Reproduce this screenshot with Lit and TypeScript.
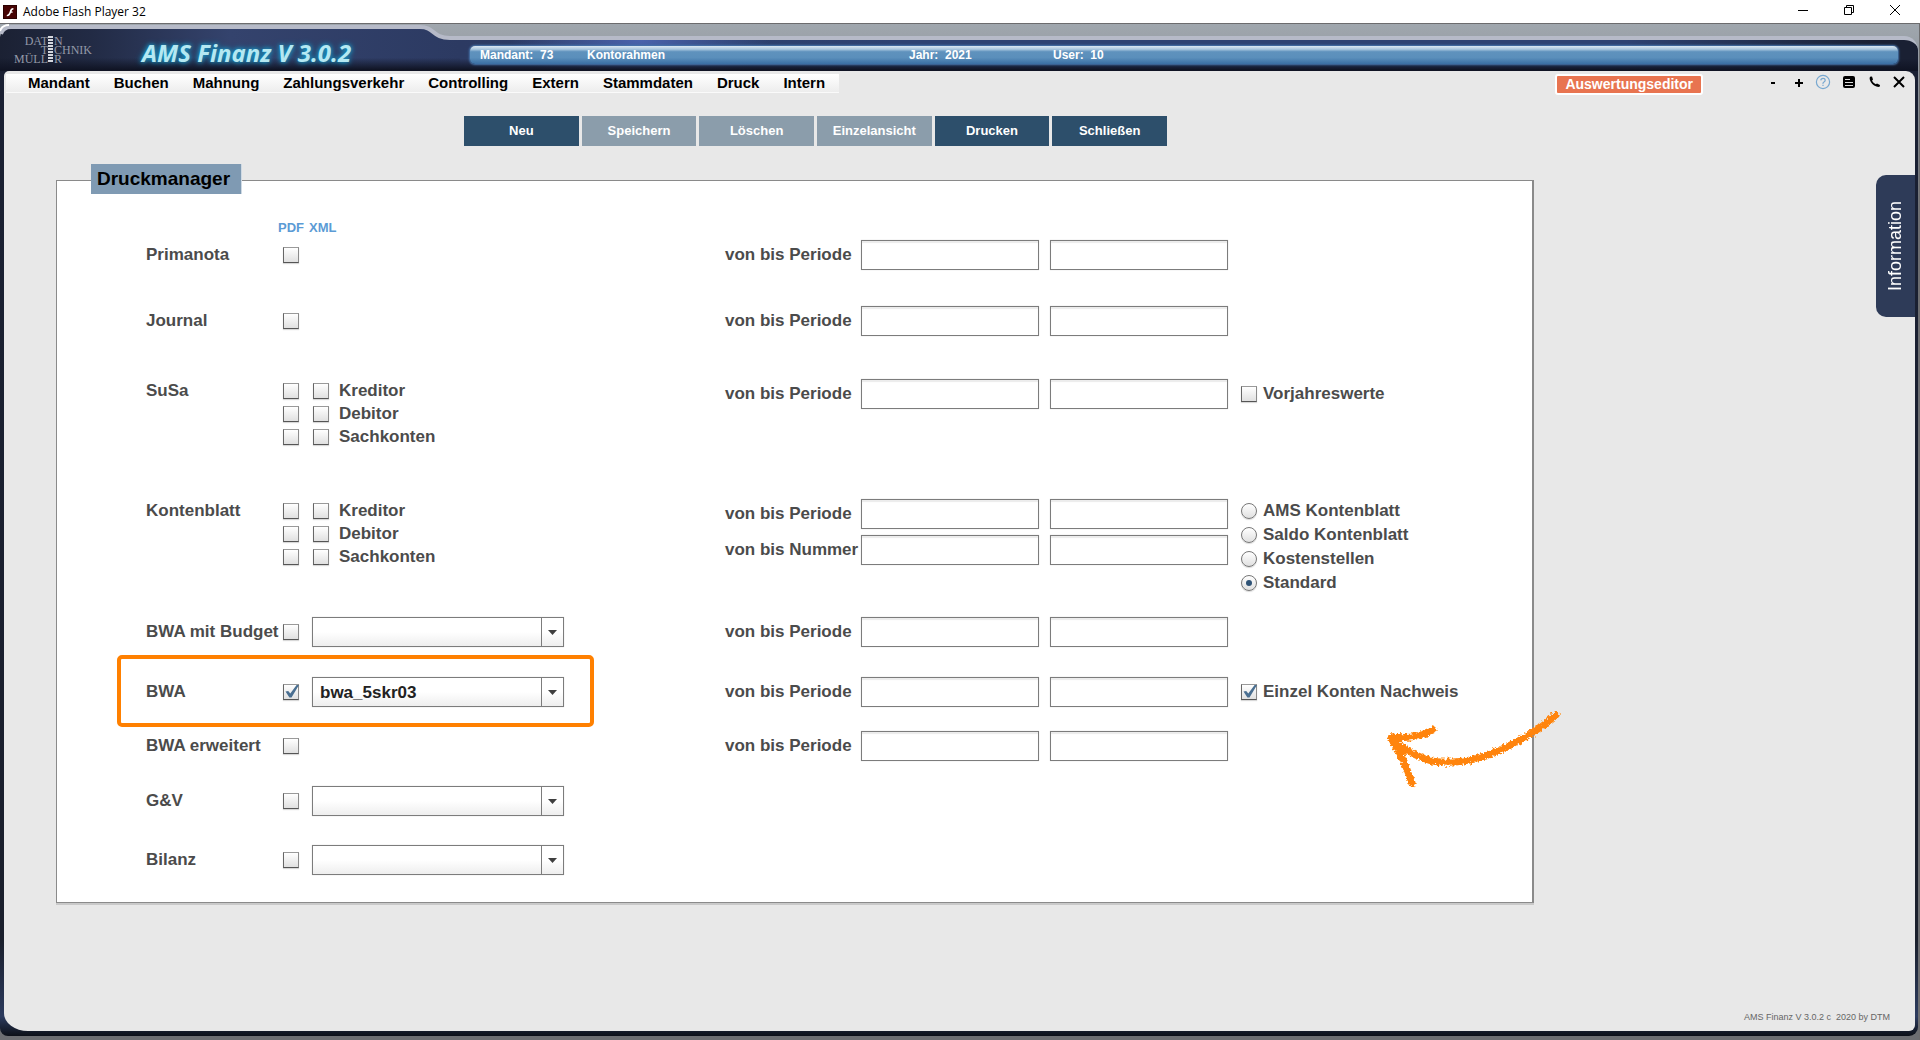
import { LitElement, html, svg, css, nothing, type TemplateResult } from "lit";
import { customElement, property } from "lit/decorators.js";

interface Option {
  label: string;
  checked?: boolean;
}

interface ReportRow {
  id: string;
  label: string;
  /** Account groups, each with its own PDF and XML box. */
  groups?: string[];
  checked?: boolean;
  /** Present when the report offers a template list. */
  template?: string;
  ranges: string[];
  flag?: Option;
  layouts?: Option[];
  highlighted?: boolean;
}

const MENU = [
  "Mandant",
  "Buchen",
  "Mahnung",
  "Zahlungsverkehr",
  "Controlling",
  "Extern",
  "Stammdaten",
  "Druck",
  "Intern",
];

const ACTIONS = [
  { label: "Neu", enabled: true },
  { label: "Speichern", enabled: false },
  { label: "Löschen", enabled: false },
  { label: "Einzelansicht", enabled: false },
  { label: "Drucken", enabled: true },
  { label: "Schließen", enabled: true },
];

const GROUPS = ["Kreditor", "Debitor", "Sachkonten"];
const PERIOD = "von bis Periode";

const ROWS: ReportRow[] = [
  { id: "primanota", label: "Primanota", ranges: [PERIOD] },
  { id: "journal", label: "Journal", ranges: [PERIOD] },
  { id: "susa", label: "SuSa", groups: GROUPS, ranges: [PERIOD], flag: { label: "Vorjahreswerte" } },
  {
    id: "kontenblatt",
    label: "Kontenblatt",
    groups: GROUPS,
    ranges: [PERIOD, "von bis Nummer"],
    layouts: [
      { label: "AMS Kontenblatt" },
      { label: "Saldo Kontenblatt" },
      { label: "Kostenstellen" },
      { label: "Standard", checked: true },
    ],
  },
  { id: "bwa-budget", label: "BWA mit Budget", template: "", ranges: [PERIOD] },
  {
    id: "bwa",
    label: "BWA",
    checked: true,
    template: "bwa_5skr03",
    ranges: [PERIOD],
    flag: { label: "Einzel Konten Nachweis", checked: true },
    highlighted: true,
  },
  { id: "bwa-erweitert", label: "BWA erweitert", ranges: [PERIOD] },
  { id: "guv", label: "G&V", template: "", ranges: [] },
  { id: "bilanz", label: "Bilanz", template: "", ranges: [] },
];

const baseStyles = css`
  * {
    box-sizing: border-box;
  }
  button {
    border: 0;
    margin: 0;
    padding: 0;
    background: none;
    font: inherit;
    color: inherit;
  }
  svg {
    display: block;
  }
`;

@customElement("title-bar")
export class TitleBar extends LitElement {
  static styles = [
    baseStyles,
    css`
      :host {
        display: flex;
        align-items: center;
        box-sizing: border-box;
        height: 24px;
        padding: 0 9px 0 3px;
        background: #fff;
        border-bottom: 1px solid #6c6c6e;
        font: 12px/16px "Open Sans", "Noto Sans", sans-serif;
        color: #000;
      }
      .name {
        flex: 1;
        padding-left: 6px;
      }
      .controls {
        display: flex;
        gap: 14px;
        padding-bottom: 3px;
      }
      .controls button {
        display: grid;
        place-items: center;
        width: 32px;
        height: 16px;
      }
    `,
  ];

  render() {
    return html`
      <svg width="14" height="14" viewBox="0 0 14 14" aria-hidden="true">
        <rect width="14" height="14" fill="#2c0000" />
        <rect x="1" y="1" width="12" height="12" fill="#470404" />
        <path
          d="M10.4 3C8 3 7.400 4.700 6.800 6.200C6.100 8.200 5.400 9.700 3.800 9.900V11.300C6.400 11.300 7.300 9.500 8 7.800H9.600V6.400H8.500C8.900 5.300 9.400 4.500 10.400 4.500Z"
          fill="#fff"
        />
      </svg>
      <span class="name">Adobe Flash Player 32</span>
      <div class="controls">
        <button aria-label="Minimieren">
          <svg width="10" height="10"><path d="M0 5.500H10" stroke="#000" /></svg>
        </button>
        <button aria-label="Verkleinern">
          <svg width="10" height="10">
            <path d="M.5 2.500H7.500V9.500H.5ZM2.500 2.500V.5H9.500V7.500H7.500" fill="none" stroke="#000" />
          </svg>
        </button>
        <button aria-label="Schließen">
          <svg width="10" height="10"><path d="M0 0L10 10M10 0L0 10" stroke="#000" /></svg>
        </button>
      </div>
    `;
  }
}

@customElement("app-banner")
export class AppBanner extends LitElement {
  static styles = [
    baseStyles,
    css`
      :host {
        display: flex;
        height: 47px;
      }
      .brand {
        position: relative;
        flex: none;
        display: flex;
        width: 460px;
      }
      .shape {
        position: absolute;
        inset: 0;
      }
      .logo {
        position: relative;
        flex: none;
        width: 142px;
        height: 47px;
        font: 12px "Liberation Serif", serif;
        fill: #9499a8;
      }
      .title {
        position: relative;
        margin: 0;
        padding-top: 13px;
        font: italic bold 24px/32px "Open Sans", "Noto Sans", sans-serif;
        white-space: nowrap;
        color: #b4e8f2;
        text-shadow:
          0 0 4px #1596c4,
          0 0 6px #1596c4;
      }
      .strip {
        flex: 1;
        margin-top: 12px;
        padding: 6px 20px 0 10px;
        border-top: 4px solid #b6bac8;
        border-radius: 0 14px 0 0;
        background:
          linear-gradient(#10142400 60%, #101424 96%),
          radial-gradient(ellipse 130px 50px at 180px 0, #4a62ac, #4a62ac00),
          linear-gradient(90deg, #2c3a62, #2e4272 30%, #2e4272 80%, #1a2033 97%);
      }
      .status {
        display: grid;
        grid-template-columns: 107px 322px 144px 1fr;
        align-items: center;
        height: 18px;
        padding-left: 10px;
        border-radius: 5px;
        background: linear-gradient(#dbe8f2, #a9c6de 18%, #5f92bd 32%, #5b8fbb 65%, #3a6ea3);
        box-shadow: 0 0 2px 1px #4775ac;
        font: bold 12px/16px "Liberation Sans", Arial, sans-serif;
        color: #fff;
        white-space: pre;
      }
    `,
  ];

  render() {
    return html`
      <div class="brand">
        <svg class="shape" width="460" height="47" viewBox="0 0 460 47" aria-hidden="true">
          <defs>
            <linearGradient id="base" x1="0" x2="1">
              <stop offset="0" stop-color="#1b2133" />
              <stop offset=".2" stop-color="#222b45" />
              <stop offset=".5" stop-color="#34436d" />
              <stop offset="1" stop-color="#2c3a62" />
            </linearGradient>
            <linearGradient id="shade" x1="0" x2="0" y1="0" y2="1">
              <stop offset=".7" stop-color="#101424" stop-opacity="0" />
              <stop offset=".97" stop-color="#101424" />
            </linearGradient>
          </defs>
          <path d="M0 47V13Q2 3 12 3H420C434 3 430 14 450 14H460V47Z" fill="url(#base)" />
          <path d="M0 47V13Q2 3 12 3H420C434 3 430 14 450 14H460V47Z" fill="url(#shade)" />
          <path d="M1 10Q3 3 11 3H420C435 3 432 14 450 14H460" fill="none" stroke="#b6bac8" stroke-width="4" />
          <path d="M0 7Q2 1 9 1" fill="none" stroke="#fff" stroke-width="2" />
        </svg>
        <svg class="logo" viewBox="0 0 142 47" role="img" aria-label="Daten Technik Müller">
          <text x="48" y="21" text-anchor="end">DAT</text>
          <text x="54" y="21">N</text>
          <text x="48" y="30" text-anchor="end">T</text>
          <text x="54" y="30">CHNIK</text>
          <text x="48" y="39" text-anchor="end">MÜLL</text>
          <text x="54" y="39">R</text>
          ${[12, 15, 18, 21, 24, 27, 30, 33, 36].map(
            (y) => svg`<rect x="48" y=${y} width="5" height="2" fill="#d4d7de" />`,
          )}
        </svg>
        <h1 class="title">AMS Finanz V 3.0.2</h1>
      </div>
      <div class="strip">
        <div class="status">
          <span>Mandant:  73</span>
          <span>Kontorahmen</span>
          <span>Jahr:  2021</span>
          <span>User:  10</span>
        </div>
      </div>
    `;
  }
}

@customElement("menu-bar")
export class MenuBar extends LitElement {
  static styles = [
    baseStyles,
    css`
      :host {
        display: flex;
        align-items: start;
        box-sizing: border-box;
        height: 45px;
        padding: 3px 4px 0 2px;
        font: bold 15px/18px "Liberation Sans", Arial, sans-serif;
        color: #000;
      }
      .menu {
        display: flex;
        gap: 24px;
        padding: 0 14px 0 22px;
        background: linear-gradient(#fff, #ededed);
        border-bottom: 1px solid #fafafa;
        white-space: nowrap;
      }
      .spacer {
        flex: 1;
      }
      .editor {
        height: 21px;
        padding: 0 8px;
        border: 2px solid #fff;
        border-radius: 3px;
        background: #e87450;
        font-size: 14px;
        line-height: 17px;
        color: #fff;
      }
      .tools {
        display: flex;
        align-items: center;
        margin-left: 56px;
        height: 16px;
      }
      .tools button {
        display: grid;
        place-items: center;
        width: 24px;
        height: 16px;
      }
      .tools .wide {
        width: 28px;
      }
    `,
  ];

  render() {
    return html`
      <nav class="menu">${MENU.map((item) => html`<button>${item}</button>`)}</nav>
      <div class="spacer"></div>
      <button class="editor">Auswertungseditor</button>
      <div class="tools">
        <button class="wide" aria-label="Kleiner">
          <svg width="12" height="12"><path d="M4 7H8" stroke="#000" stroke-width="2" /></svg>
        </button>
        <button aria-label="Größer">
          <svg width="12" height="12"><path d="M2 7H10M6 3V11" stroke="#000" stroke-width="2" /></svg>
        </button>
        <button aria-label="Hilfe">
          <svg width="16" height="16" viewBox="0 0 16 16" fill="none" stroke="#78a8d0">
            <circle cx="8" cy="8" r="6.600" stroke-width="1.200" />
            <path d="M5.800 6.400Q5.900 4.300 8 4.300T10.200 6.200Q10.200 7.200 9 7.900T8 9.800M8 10.800V12" stroke-width="1.200" />
          </svg>
        </button>
        <button class="wide" aria-label="Notizen">
          <svg width="12" height="14" viewBox="0 0 12 14">
            <rect y="1" width="12" height="12" rx="2" fill="#000" />
            <path d="M2 4.500H7M2 7.500H10M2 10.500H10" stroke="#ddd" />
          </svg>
        </button>
        <button aria-label="Telefon">
          <svg width="12" height="12" viewBox="0 0 12 12">
            <path
              d="M1 .8L3 .6L4 3.600L3 4.800Q4.200 7 6.800 8.300L8 7.600L11 8.900L10.800 10.600Q9.600 11.400 7.400 10.600Q2.400 8.600 .9 4Q.3 2 1 .8Z"
              fill="#000"
            />
          </svg>
        </button>
        <button aria-label="Beenden">
          <svg width="12" height="12"><path d="M1 1L11 11M11 1L1 11" stroke="#000" stroke-width="2" /></svg>
        </button>
      </div>
    `;
  }
}

@customElement("print-manager")
export class PrintManager extends LitElement {
  @property({ attribute: false }) rows: ReportRow[] = ROWS;

  static styles = [
    baseStyles,
    css`
      :host {
        display: block;
        border: solid #8a8a8a;
        border-width: 1px 2px 1px 1px;
        box-shadow: 0 2px 0 #c9c9c9;
        background: #fff;
        font: bold 17px/24px "Liberation Sans", Arial, sans-serif;
        color: #4b4b4b;
      }
      .heading {
        width: max-content;
        margin: -17px 0 0 34px;
        padding: 0 11px 0 6px;
        border-right: 1px solid #cfdae4;
        background: #7f9ab3;
        font-size: 19px;
        line-height: 30px;
        color: #000;
      }
      .formats {
        display: flex;
        gap: 5px;
        margin: 26px 0 4px;
        padding-left: 221px;
        font-size: 13px;
        line-height: 16px;
        color: #5b9bd5;
      }
      .rows {
        display: grid;
        grid-template-rows: 66px 73px 120px 118px 60px 54px 55px 59px auto;
        padding: 0 16px 27px 89px;
      }
      .row {
        position: relative;
        display: grid;
        grid-template-columns: 137px 442px 503px 1fr;
        align-items: start;
        white-space: nowrap;
      }
      .name,
      .line {
        line-height: 30px;
      }
      .line {
        display: flex;
        align-items: center;
        height: 30px;
      }
      .grouped .name {
        line-height: 23px;
      }
      .group {
        display: grid;
        grid-template-columns: 30px 26px 1fr;
        align-items: center;
        height: 23px;
      }
      .ranges {
        display: grid;
        gap: 6px;
      }
      .range {
        display: grid;
        grid-template-columns: 136px 189px 178px;
        line-height: 30px;
      }
      .field {
        width: 178px;
        height: 30px;
        padding: 0 6px;
        border: 1px solid #7c7c7c;
        border-radius: 0;
        outline: 0;
        background: #fff;
        box-shadow:
          inset 0 2px 1px #ececec,
          0 0 1px #d0d0d0;
        font: inherit;
        color: #222;
      }
      .layout {
        height: 24px;
      }
      .option {
        display: flex;
        align-items: center;
        gap: 6px;
        padding-left: 13px;
      }
      .box,
      .radio {
        appearance: none;
        flex: none;
        width: 16px;
        height: 16px;
        margin: 0;
        border: 1px solid;
        border-color: #9a9a9a #8a8a8a #555 #666;
        background: linear-gradient(#fff, #e0e0e0);
        box-shadow: 0 1px 1px #d8d8d8;
      }
      .box:checked::before {
        content: "";
        display: block;
        width: 15px;
        height: 14px;
        background: #4a6f91;
        clip-path: polygon(10% 46%, 28% 42%, 42% 60%, 84% 0, 100% 0, 50% 90%, 36% 90%);
      }
      .radio {
        display: grid;
        place-items: center;
        border-radius: 50%;
        border-color: #777;
      }
      .radio:checked::before {
        content: "";
        width: 6px;
        height: 6px;
        border-radius: 50%;
        background: #2f5376;
      }
      .combo {
        position: relative;
        width: 252px;
        margin-left: 13px;
      }
      .combo select {
        appearance: none;
        display: block;
        width: 100%;
        height: 30px;
        padding: 0 30px 0 7px;
        border: 1px solid #7c7c7c;
        border-radius: 0;
        background: linear-gradient(#fff 50%, #eee);
        box-shadow: 0 0 1px #d0d0d0;
        font: inherit;
        color: #222;
      }
      .drop {
        position: absolute;
        top: 1px;
        right: 0;
        pointer-events: none;
      }
      .frame {
        position: absolute;
        left: -29px;
        top: -22px;
        width: 477px;
        height: 72px;
        border: 4px solid #ff8000;
        border-radius: 5px;
        pointer-events: none;
      }
      .arrow {
        position: absolute;
        left: 1234px;
        top: 27px;
        z-index: 1;
        pointer-events: none;
      }
    `,
  ];

  private renderChecks(row: ReportRow): TemplateResult {
    if (row.groups) {
      return html`<div>
        ${row.groups.map(
          (group, i) => html`<div class="group">
            <input class="box" type="checkbox" aria-label="${row.label} ${group} PDF" />
            <input class="box" type="checkbox" id="${row.id}-xml-${i}" />
            <label for="${row.id}-xml-${i}">${group}</label>
          </div>`,
        )}
      </div>`;
    }
    return html`<div class="line">
      <input class="box" type="checkbox" id="${row.id}-pdf" .checked=${row.checked ?? false} />
      ${row.template === undefined
        ? nothing
        : html`<div class="combo">
            <select aria-label="${row.label} Vorlage">
              <option>${row.template}</option>
            </select>
            <svg class="drop" width="23" height="28" aria-hidden="true">
              <path d="M.5 0V28" stroke="#7c7c7c" />
              <path d="M7 12H16L11.500 17Z" fill="#3f3f3f" />
            </svg>
          </div>`}
    </div>`;
  }

  private renderExtras(row: ReportRow) {
    if (row.layouts) {
      return html`<div>
        ${row.layouts.map(
          (layout) => html`<label class="option layout">
            <input class="radio" type="radio" name=${row.id} .checked=${layout.checked ?? false} />${layout.label}
          </label>`,
        )}
      </div>`;
    }
    return row.flag
      ? html`<label class="option line">
          <input class="box" type="checkbox" .checked=${row.flag.checked ?? false} />${row.flag.label}
        </label>`
      : nothing;
  }

  private renderHighlight() {
    return html`
      <div class="frame"></div>
      <svg class="arrow" width="190" height="90" viewBox="0 0 190 90" aria-hidden="true">
        <filter id="chalk" x="-10%" y="-10%" width="120%" height="120%">
          <feTurbulence type="fractalNoise" baseFrequency=".4" numOctaves="3" seed="4" />
          <feDisplacementMap in="SourceGraphic" scale="6" xChannelSelector="R" yChannelSelector="G" />
        </filter>
        <g fill="none" stroke="#ff840a" stroke-linecap="round" filter="url(#chalk)">
          <path d="M12 36Q30 51 52 57Q84 62 118 47Q154 31 176 11" stroke-width="7" />
          <path d="M12 33Q34 36 53 26" stroke-width="7" />
          <path d="M12 36Q22 50 32 79" stroke-width="7" />
          <path d="M12 34L21 48" stroke-width="9" />
        </g>
      </svg>
    `;
  }

  private renderRow(row: ReportRow) {
    return html`<div class="row ${row.groups ? "grouped" : ""}">
      ${row.groups
        ? html`<span class="name">${row.label}</span>`
        : html`<label class="name" for="${row.id}-pdf">${row.label}</label>`}
      ${this.renderChecks(row)}
      <div class="ranges">
        ${row.ranges.map(
          (range, i) => html`<div class="range">
            <label for="${row.id}-from-${i}">${range}</label>
            <input class="field" id="${row.id}-from-${i}" type="text" />
            <input class="field" type="text" aria-label="${row.label} ${range} Ende" />
          </div>`,
        )}
      </div>
      ${this.renderExtras(row)} ${row.highlighted ? this.renderHighlight() : nothing}
    </div>`;
  }

  render() {
    return html`
      <h2 class="heading">Druckmanager</h2>
      <div class="formats"><span>PDF</span><span>XML</span></div>
      <form class="rows">${this.rows.map((row) => this.renderRow(row))}</form>
    `;
  }
}

@customElement("app-root")
export class AppRoot extends LitElement {
  static styles = [
    baseStyles,
    css`
      :host {
        display: flex;
        flex-direction: column;
        min-height: 100vh;
        font-family: "Liberation Sans", Arial, sans-serif;
      }
      .shell {
        flex: 1;
        display: flex;
        flex-direction: column;
        padding: 0 1px 4px 0;
        border-right: 1px solid #6c6c6e;
        background: linear-gradient(#a0a7ae, #9298a0 40px, #6c6e72 200px);
      }
      .body {
        flex: 1;
        display: flex;
        padding: 0 3px 5px 4px;
        border-radius: 0 0 9px 8px;
        background: linear-gradient(#1a2033, #1a1f2c 90%, #2c3b5e 98%, #0c1018);
      }
      .page {
        position: relative;
        flex: 1;
        display: flex;
        flex-direction: column;
        border-radius: 5px 9px 6px 24px / 5px 9px 6px 18px;
        background: #e8e8e8;
      }
      .actions {
        display: grid;
        grid-template-columns: repeat(6, 1fr);
        gap: 3px;
        width: 703px;
        margin-left: 460px;
      }
      .action {
        height: 30px;
        background: #2d4f6b;
        font: bold 13px/30px "Liberation Sans", Arial, sans-serif;
        color: #fff;
      }
      .action:disabled {
        background: #8b9dab;
      }
      .panel {
        margin: 34px 381px 0 52px;
      }
      .info {
        position: absolute;
        top: 104px;
        right: 0;
        width: 39px;
        height: 142px;
        border-radius: 0 10px 10px 0;
        background: #2e3b58;
        font-size: 18px;
        color: #fff;
        writing-mode: vertical-rl;
        transform: rotate(180deg);
      }
      .footer {
        margin-top: auto;
        padding: 0 25px 8px 0;
        font-size: 9px;
        line-height: 12px;
        text-align: right;
        white-space: pre;
        color: #666;
      }
    `,
  ];

  render() {
    return html`
      <title-bar></title-bar>
      <div class="shell">
        <app-banner></app-banner>
        <div class="body">
          <main class="page">
            <menu-bar></menu-bar>
            <div class="actions">
              ${ACTIONS.map(
                (action) => html`<button class="action" ?disabled=${!action.enabled}>${action.label}</button>`,
              )}
            </div>
            <print-manager class="panel"></print-manager>
            <button class="info">Information</button>
            <footer class="footer">AMS Finanz V 3.0.2 c  2020 by DTM</footer>
          </main>
        </div>
      </div>
    `;
  }
}
